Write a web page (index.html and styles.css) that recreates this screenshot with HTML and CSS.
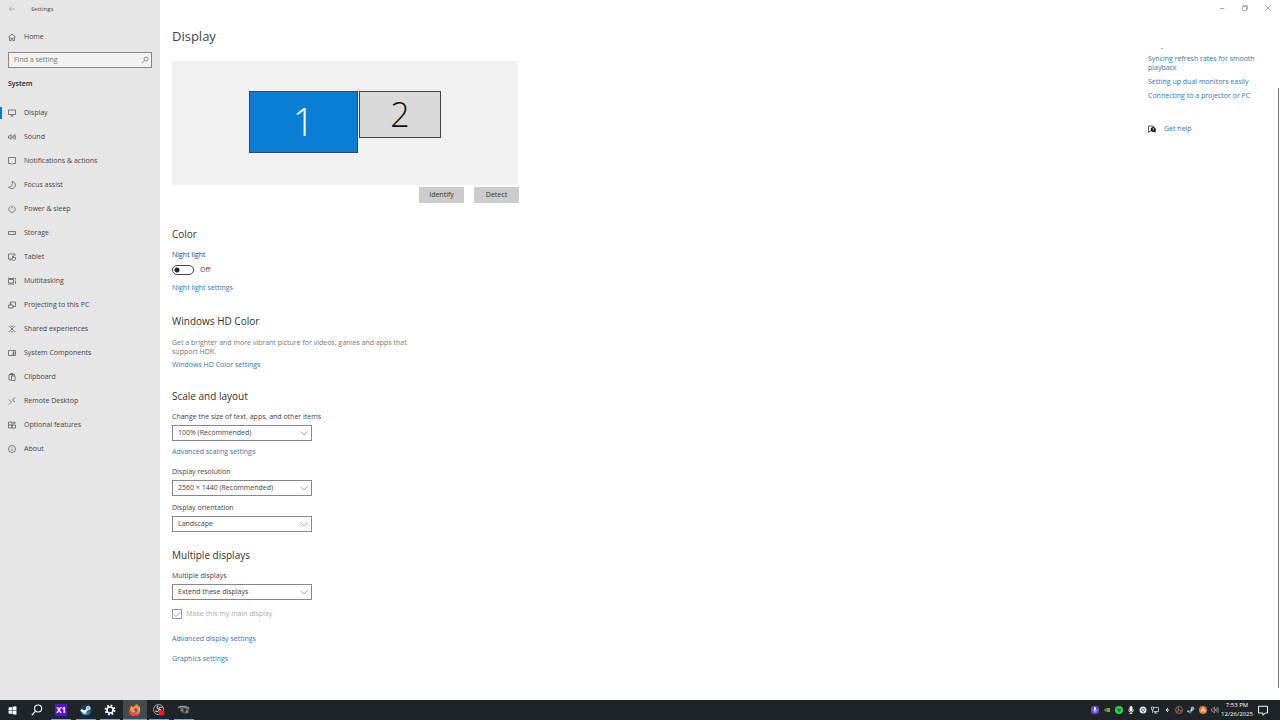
FILE: index.html
```html
<!DOCTYPE html>
<html lang="en">
<head>
<meta charset="utf-8">
<meta name="viewport" content="width=device-width, initial-scale=1">
<title>Settings</title>
<link rel="stylesheet" href="styles.css">
</head>
<body>
<div class="window">
  <aside class="sidebar">
    <header class="titlebar">
      <button class="back" aria-label="Back"><svg class="icon" viewBox="0 0 16 16"><path d="M14 8H3M7 3.500L2.500 8 7 12.500"/></svg></button>
      <span class="app-name">Settings</span>
    </header>
    <a class="nav-item home" href="#home"><svg class="icon" viewBox="0 0 16 16"><path d="M1 8l7-6 7 6M3 7v8h3.500v-5h3v5H13V7"/></svg>Home</a>
    <form class="search">
      <input class="search-input" type="text" placeholder="Find a setting" aria-label="Find a setting">
      <svg class="icon search-icon" viewBox="0 0 16 16"><circle cx="10" cy="6" r="4"/><path d="M7 9l-5 5"/></svg>
    </form>
    <h2 class="group-title">System</h2>
    <nav class="nav">
      <a class="nav-item active" href="#display"><svg class="icon" viewBox="0 0 16 16"><path d="M1 2h14v9H1zM8 11v3M5 14h6"/></svg>Display</a>
      <a class="nav-item" href="#sound"><svg class="icon" viewBox="0 0 16 16"><path d="M1 6h2l3-3v10l-3-3H1zM8.500 6v4M11 4q2 4 0 8M13.500 2q3 6 0 12"/></svg>Sound</a>
      <a class="nav-item" href="#notifications"><svg class="icon" viewBox="0 0 16 16"><path d="M1 1h14v12h-5L8 15l-2-2H1z"/></svg>Notifications &amp; actions</a>
      <a class="nav-item" href="#focus"><svg class="icon" viewBox="0 0 16 16"><path d="M8 1c9 1 9 13 0 14-3 0-5-1-7-3 7 0 9-5 7-11z"/></svg>Focus assist</a>
      <a class="nav-item" href="#power"><svg class="icon" viewBox="0 0 16 16"><path d="M5 2.700a6.300 6.300 0 1 0 6 0M8 1v6"/></svg>Power &amp; sleep</a>
      <a class="nav-item" href="#storage"><svg class="icon" viewBox="0 0 16 16"><path d="M1 5h14v6H1zM3.500 8.500h1M12 7v2"/></svg>Storage</a>
      <a class="nav-item" href="#tablet"><svg class="icon" viewBox="0 0 16 16"><path d="M6 12H1V2h13v4M3 14h4M9 14l-2-3h2V6h2v3h4v3l-2 3h-3z"/></svg>Tablet</a>
      <a class="nav-item" href="#multitasking"><svg class="icon" viewBox="0 0 16 16"><path d="M1 5h10v7H1zM1 1v2h10V1M1 15v-1h10v1M15 2v3M15 7v7M13 3h2"/></svg>Multitasking</a>
      <a class="nav-item" href="#projecting"><svg class="icon" viewBox="0 0 16 16"><path d="M5 8V2h10v9h-5M1 8h9v6H1zM3 6h4"/></svg>Projecting to this PC</a>
      <a class="nav-item" href="#shared"><svg class="icon" viewBox="0 0 16 16"><path d="M3 3l10 10M13 3L3 13M1.500 3.500l2-2M12.500 1.500l2 2M1.500 12.500l2 2M12.500 14.500l2-2M6 2.500h4M6 13.500h4"/></svg>Shared experiences</a>
      <a class="nav-item" href="#components"><svg class="icon" viewBox="0 0 16 16"><path d="M1 3h14v10H1zM11 3v10M11 8h4M8 10h3"/></svg>System Components</a>
      <a class="nav-item" href="#clipboard"><svg class="icon" viewBox="0 0 16 16"><path d="M6 14H2V3h11v3M5 3V1h5v3H5M7 6h7v9H7z"/></svg>Clipboard</a>
      <a class="nav-item" href="#remote"><svg class="icon" viewBox="0 0 16 16"><path d="M2 5l5 5-5 5M14 1L9 6l5 4"/></svg>Remote Desktop</a>
      <a class="nav-item" href="#optional"><svg class="icon" viewBox="0 0 16 16"><path d="M1 2h7v12H1zM1 8h14v6H8V8M12 1v5M9.500 3.500h6"/></svg>Optional features</a>
      <a class="nav-item" href="#about"><svg class="icon" viewBox="0 0 16 16"><circle cx="8" cy="8" r="7"/><path d="M8 7v5M8 4v1"/></svg>About</a>
    </nav>
  </aside>

  <main class="content">
    <h1 class="page-title">Display</h1>
    <div class="monitor-area">
      <div class="monitor primary">1</div>
      <div class="monitor">2</div>
    </div>
    <div class="monitor-actions">
      <button class="button">Identify</button>
      <button class="button">Detect</button>
    </div>

    <section class="section color">
      <h2 class="heading">Color</h2>
      <label class="label" for="night">Night light</label>
      <div class="toggle-row"><input class="toggle" type="checkbox" role="switch" id="night"><span>Off</span></div>
      <a class="link after-toggle" href="#night">Night light settings</a>
    </section>

    <section class="section hd">
      <h2 class="heading">Windows HD Color</h2>
      <p class="description">Get a brighter and more vibrant picture for videos, games and apps that support HDR.</p>
      <a class="link after-text" href="#hd">Windows HD Color settings</a>
    </section>

    <section class="section">
      <h2 class="heading">Scale and layout</h2>
      <label class="label" for="scale">Change the size of text, apps, and other items</label>
      <div class="select-box"><select class="select" id="scale"><option>100% (Recommended)</option></select><svg class="icon chevron" viewBox="0 0 16 16"><path d="M1 5l7 7 7-7"/></svg></div>
      <a class="link after-select" href="#scaling">Advanced scaling settings</a>
      <label class="label resolution" for="resolution">Display resolution</label>
      <div class="select-box"><select class="select" id="resolution"><option>2560 × 1440 (Recommended)</option></select><svg class="icon chevron" viewBox="0 0 16 16"><path d="M1 5l7 7 7-7"/></svg></div>
      <label class="label orientation" for="orientation">Display orientation</label>
      <div class="select-box"><select class="select" id="orientation"><option>Landscape</option></select><svg class="icon chevron" viewBox="0 0 16 16"><path d="M1 5l7 7 7-7"/></svg></div>
    </section>

    <section class="section multiple">
      <h2 class="heading">Multiple displays</h2>
      <label class="label" for="multiple">Multiple displays</label>
      <div class="select-box"><select class="select" id="multiple"><option>Extend these displays</option></select><svg class="icon chevron" viewBox="0 0 16 16"><path d="M1 5l7 7 7-7"/></svg></div>
      <div class="check-row">
        <span class="check-box"><input class="check" type="checkbox" id="main-display" checked disabled><svg class="icon tick" viewBox="0 0 16 16"><path d="M1 8l5 5 9-9"/></svg></span>
        <label for="main-display">Make this my main display</label>
      </div>
      <a class="link advanced" href="#advanced">Advanced display settings</a>
      <a class="link graphics" href="#graphics">Graphics settings</a>
    </section>
  </main>

  <aside class="help">
    <div class="window-controls">
      <button class="control" aria-label="Minimize"><svg class="icon" viewBox="0 0 16 16"><path d="M3 9h10"/></svg></button>
      <button class="control" aria-label="Restore"><svg class="icon" viewBox="0 0 16 16"><path d="M3 5h8v8H3zM5 5V3h8v8h-2"/></svg></button>
      <button class="control" aria-label="Close"><svg class="icon" viewBox="0 0 16 16"><path d="M3 3l10 10M13 3L3 13"/></svg></button>
    </div>
    <div class="help-links">
      <a class="link" href="#syncing">Syncing refresh rates for smooth playback</a>
      <a class="link" href="#dual">Setting up dual monitors easily</a>
      <a class="link" href="#projector">Connecting to a projector or PC</a>
      <a class="link get-help" href="#help"><svg class="icon help-icon" viewBox="0 0 16 16"><path class="outline" d="M6 12H4l-3 3V2h10v3"/><circle class="solid" cx="10.500" cy="9" r="5"/><path class="solid" d="M11 12l4 4v-6z"/><path class="mark" d="M9 7.500q1.500-2 3 0 0 1-1.500 2M10.500 11v1"/></svg>Get help</a>
    </div>
  </aside>
  <div class="scrollbar"></div>
</div>

<footer class="taskbar">
  <div class="apps">
    <button class="task" aria-label="Start"><svg class="app start" viewBox="0 0 16 16"><path fill="#fff" d="M1 2.500l6-.8v5.800H1zm7-1L15 .5v7H8zM1 8.500h6v5.800l-6-.8zm7 0h7v7l-7-1z"/></svg></button>
    <button class="task" aria-label="Search"><svg class="app" viewBox="0 0 16 16" fill="none" stroke="#fff" stroke-width="1.500"><circle cx="9.500" cy="6" r="4.700"/><path d="M6.300 9.300L1 15"/></svg></button>
    <button class="task open" aria-label="X1"><span class="x-one">X1</span></button>
    <button class="task open" aria-label="Steam"><svg class="app" viewBox="0 0 16 16"><circle cx="8" cy="8" r="7.500" fill="#173f69"/><path d="M1 10a7.500 7.500 0 0 0 14 0z" fill="#1684bd"/><path d="M1 8l5 2.500L10 7" stroke="#fff" stroke-width="3" fill="none"/><circle cx="11" cy="5.500" r="2.500" fill="#9cb8d0" stroke="#fff"/><circle cx="6" cy="11" r="2.200" fill="#fff"/></svg></button>
    <button class="task open" aria-label="Settings"><svg class="app" viewBox="0 0 16 16" fill="none" stroke="#fff"><circle cx="8" cy="8" r="4" stroke-width="2"/><circle cx="8" cy="8" r="6" stroke-width="2.500" stroke-dasharray="2.360 2.360"/></svg></button>
    <button class="task open selected" aria-label="Firefox"><svg class="app" viewBox="0 0 16 16"><path d="M1 8Q1 4 3.500 2l1 2L7 3q1-2 3-3 0 2 2 3l1 2 1-1q3 12-6 12T1 8z" fill="#ff8a25"/><path d="M1 8q0 8 7 8 6 0 7-6-3 4-7 3-5-1-7-5z" fill="#f13b50"/><path d="M10 0q0 2 2 3 3 3 1 7 3-2 1-6-2-2-4-4z" fill="#ffd43e"/><circle cx="8" cy="8.500" r="3.200" fill="#7546c9"/><path d="M3 5l5 1-2 2 3 2-4 1z" fill="#ffb52d"/></svg></button>
    <button class="task open" aria-label="OBS"><svg class="app" viewBox="0 0 16 16"><circle cx="7.500" cy="7.500" r="6.800" fill="#252328" stroke="#ccc"/><path d="M7 2q-4 4 1 5 4 0 4 4M3 9q4 3 5-2M13 5q-5-2-5 2" stroke="#bbb" stroke-width="1.500" fill="none"/><circle cx="11.500" cy="11.500" r="4" fill="#ed1928"/></svg></button>
    <button class="task open" aria-label="Media"><svg class="app" viewBox="0 0 16 16"><path d="M2 4l9-2 4 4-1 6-5 1-6-3z" fill="#555b5e"/><path d="M0 5q7-4 15 1M4 8l8 1v3" stroke="#a0a4a6" stroke-width="1.500" fill="none"/><circle cx="9" cy="8" r="2" fill="#24282b"/></svg></button>
  </div>
  <div class="tray">
    <svg class="tray-icon" viewBox="0 0 16 16"><rect width="16" height="16" rx="6" fill="#6847c9"/><rect x="6" y="2" width="4" height="7" rx="2" fill="#fff"/><path d="M4 7q0 4 4 4t4-4M8 11v3" stroke="#fff" fill="none"/></svg>
    <svg class="tray-icon" viewBox="0 0 16 16"><path d="M8 4h6v8H8z" fill="#76a842"/><path d="M2 8q4-6 9 0-5 5-9 0zm3 0q3-2 4 0-2 3-4 0" stroke="#76a842" stroke-width="1.500" fill="#1e2427"/></svg>
    <svg class="tray-icon" viewBox="0 0 16 16"><circle cx="8" cy="8" r="8" fill="#32d34b"/><path d="M3 5l10 1-5 7z" fill="#127b29"/></svg>
    <svg class="tray-icon" viewBox="0 0 16 16"><rect x="5" width="6" height="10" rx="3" fill="#fff"/><path d="M3 7q0 5 5 5t5-5M8 12v4M5 15h6" stroke="#fff" stroke-width="1.500" fill="none"/></svg>
    <svg class="tray-icon" viewBox="0 0 16 16"><circle cx="8" cy="8" r="7" fill="#e8eaeb"/><circle cx="8" cy="8" r="3" fill="none" stroke="#4e5458" stroke-width="1.500"/><path d="M3 5l2 1M11 6l2-1M8 11v3" stroke="#596167"/></svg>
    <svg class="tray-icon" viewBox="0 0 16 16" fill="none" stroke="#e4e6e7" stroke-width="1.500"><path d="M5 3h10v8H5M9 11v3M6 14h7M1 2h4v5H1zM3 7v7"/></svg>
    <svg class="tray-icon" viewBox="0 0 16 16"><path d="M10 4L6 8l4 4M6 8h6" stroke="#eee" stroke-width="2" fill="none"/></svg>
    <svg class="tray-icon" viewBox="0 0 16 16"><circle cx="8" cy="8" r="7" fill="#281d20" stroke="#d1b9bb"/><path d="M7 2q-3 6 2 6 5 0 3 4M2 10q6 2 6-3" stroke="#d1b9bb" fill="none"/><circle cx="4" cy="12" r="3" fill="#dc2636"/></svg>
    <svg class="tray-icon" viewBox="0 0 16 16"><path d="M1 10l5 2 5-6" stroke="#e9f2ff" stroke-width="3" fill="none"/><circle cx="11" cy="5" r="3" fill="#75a2cf" stroke="#fff"/><circle cx="6" cy="12" r="3" fill="#4585be"/></svg>
    <svg class="tray-icon" viewBox="0 0 16 16"><circle cx="8" cy="8" r="8" fill="#ef7932"/><path d="M4 12l4-8 4 8M4 9h8" stroke="#fff" stroke-width="1.500" fill="none"/></svg>
    <svg class="tray-icon" viewBox="0 0 16 16" fill="none" stroke="#e4e6e7"><path d="M1 6h2l4-4v12l-4-4H1zM9 6v4M11 4q2 4 0 8M13 2q4 6 0 12"/></svg>
  </div>
  <div class="clock"><time>7:53 PM</time><time>12/26/2025</time></div>
  <button class="notify" aria-label="Notifications"><svg class="app" viewBox="0 0 16 16" fill="none" stroke="#fff" stroke-width="1.300"><path d="M2 3h12v9h-3l-3 3v-3H2z"/></svg></button>
</footer>
</body>
</html>
```
FILE: styles.css
```css
* { box-sizing: border-box; }
body {
  margin: 0;
  min-height: 100vh;
  display: flex;
  flex-direction: column;
  background: #fff;
  color: #444;
  font: 7px/10px "Open Sans", "Noto Sans", sans-serif;
}
button, input, select { font: inherit; color: inherit; }
button { border: 0; padding: 0; background: none; }
h1, h2, p { margin: 0; font-weight: 400; }
a { text-decoration: none; color: inherit; }
.icon { width: 8px; height: 8px; flex: none; fill: none; stroke: #555; stroke-width: 1.5; }
.window { flex: 1; display: flex; }

.sidebar { width: 160px; flex: none; background: #e6e6e6; }
.titlebar { height: 17px; padding-left: 8px; display: flex; align-items: center; gap: 15px; font-size: 6px; }
.back { display: flex; }
.back .icon { stroke: #999; }
.nav-item { height: 24px; padding-left: 8px; display: flex; align-items: center; gap: 8px; }
.home { margin-top: 8px; }
.search { position: relative; margin: 3px 8px 0; }
.search-input { display: block; width: 100%; height: 16px; padding: 0 20px 1px 5px; border: 1px solid #888; border-radius: 0; background: #f1f1f1; }
.search-input::placeholder { color: #777; opacity: 1; }
.search-icon { position: absolute; right: 3px; top: 4px; stroke: #777; }
.group-title { margin-top: 11px; padding-left: 8px; font-size: 7px; font-weight: 600; color: #222; }
.nav { margin-top: 12px; }
.active { background: linear-gradient(#0078d7, #0078d7) left center / 2px 12px no-repeat; }

.content { flex: 1; padding: 26px 0 24px 12px; }
.page-title { font-size: 13px; line-height: 20px; }
.monitor-area { max-width: 346px; height: 124px; margin-top: 15px; padding-top: 30px; display: flex; justify-content: center; align-items: flex-start; gap: 1px; background: #f1f1f1; }
.monitor { width: 82px; height: 47px; padding-bottom: 2px; display: flex; align-items: center; justify-content: center; border: 1px solid #444; background: #dadada; color: #111; font-size: 34px; font-weight: 300; line-height: 40px; }
.primary { width: 109px; height: 62px; background: #0a7dd4; color: #fff; font-size: 38px; }
.monitor-actions { max-width: 347px; margin-top: 2px; display: flex; justify-content: flex-end; gap: 10px; }
.button { width: 45px; height: 16px; background: #ccc; color: #333; }

.section { margin-top: 19px; display: flex; flex-direction: column; align-items: flex-start; }
.color { margin-top: 24px; }
.hd { margin-top: 21px; }
.multiple { margin-top: 16px; }
.heading { margin-bottom: 9px; font-size: 10px; line-height: 14px; color: #333; }
.link { color: #2f78b7; }
.toggle-row { height: 11px; margin-top: 4px; display: flex; align-items: center; gap: 6px; }
.toggle { appearance: none; width: 22px; height: 10px; margin: 0; border: 1px solid #444; border-radius: 5px; background: radial-gradient(circle at 4px 4px, #222 2px, transparent 3px); }
.after-toggle { margin-top: 8px; }
.description { max-width: 244px; margin-top: 1px; line-height: 9px; color: #777; }
.after-text { margin-top: 4px; }
.select-box { position: relative; width: 140px; margin-top: 3px; }
.select { appearance: none; display: block; width: 100%; height: 16px; padding: 0 16px 0 5px; border: 1px solid #888; border-radius: 0; background: #fff; }
.chevron { position: absolute; right: 4px; top: 4px; stroke: #888; pointer-events: none; }
.after-select { margin-top: 6px; }
.resolution { margin-top: 10px; }
.orientation { margin-top: 7px; }
.check-row { margin-top: 9px; display: flex; align-items: center; gap: 4px; color: #aaa; }
.check-box { position: relative; width: 10px; height: 10px; }
.check { appearance: none; display: block; width: 10px; height: 10px; margin: 0; border: 1px solid #999; }
.tick { position: absolute; left: 1px; top: 1px; stroke: #888; }
.advanced { margin-top: 15px; }
.graphics { margin-top: 10px; }

.help { width: 130px; flex: none; display: flex; flex-direction: column; }
.window-controls { height: 16px; display: flex; justify-content: flex-end; align-items: center; gap: 15px; padding-right: 6px; }
.control { display: flex; }
.control .icon { stroke: #999; }
.help-links { position: relative; padding: 38px 16px 0 0; display: flex; flex-direction: column; gap: 5px; line-height: 9px; }
.help-links::before { content: ""; position: absolute; left: 13px; top: 32px; width: 2px; height: 1px; background: #9ab4cb; }
.get-help { margin-top: 19px; display: flex; align-items: center; gap: 8px; }
.help-icon .outline { stroke: #222; }
.help-icon .solid { fill: #111; stroke: none; }
.help-icon .mark { stroke: #fff; }
.scrollbar { width: 1px; margin: 88px 1px 12px 0; background: #777; }

.taskbar { height: 20px; flex: none; display: flex; align-items: stretch; justify-content: flex-end; background: #1e2427; color: #fff; }
.apps { flex: 1; max-width: 196px; margin-right: auto; display: flex; }
.task { flex: 1; display: flex; align-items: center; justify-content: center; }
.open { background: linear-gradient(#6aaee0, #6aaee0) center bottom / 20px 1px no-repeat; }
.selected { background-color: #454a4d; background-size: 100% 1px; }
.app { width: 12px; height: 12px; }
.start { width: 9px; height: 9px; }
.x-one { width: 12px; height: 12px; background: #5a12d0; font-size: 8px; line-height: 12px; font-weight: 700; }
.tray { display: flex; align-items: center; gap: 4px; }
.tray-icon { width: 8px; height: 8px; }
.clock { width: 36px; display: flex; flex-direction: column; align-items: center; justify-content: center; font-size: 6px; line-height: 9px; }
.notify { width: 25px; display: flex; align-items: center; padding-left: 2px; }
```
